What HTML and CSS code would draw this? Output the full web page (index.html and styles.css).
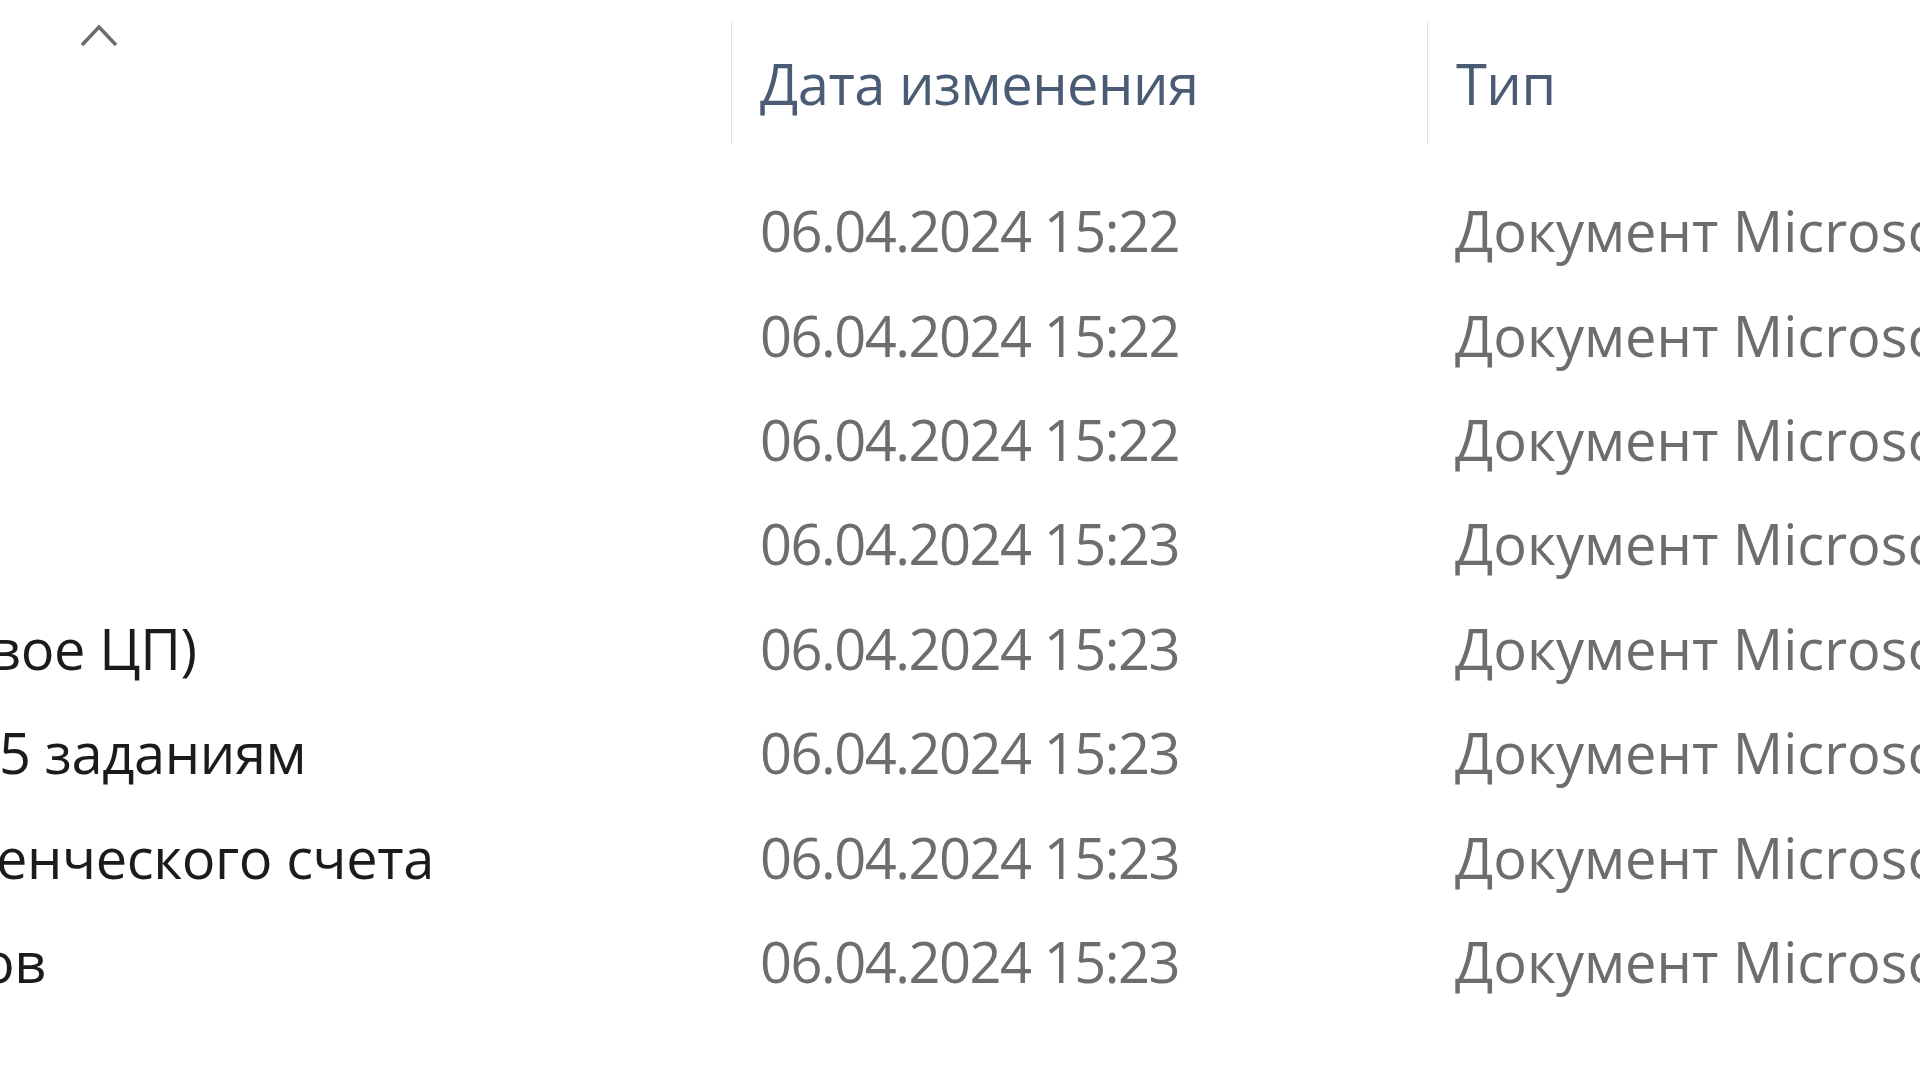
FILE: index.html
```html
<!DOCTYPE html>
<html lang="ru">
<head>
    <meta charset="UTF-8">
    <meta name="viewport" content="width=device-width, initial-scale=1.0">
    <title>Проводник</title>
    <link rel="stylesheet" href="styles.css">
</head>
<body>
    <div class="file-list">
        <div class="list-header">
            <div class="head-cell name-head">
                <svg class="sort-caret" width="40" height="28" viewBox="0 0 40 28">
                    <path d="M3 23 L20 5 L37 23" fill="none" stroke="#6c6c6c" stroke-width="3.5"/>
                </svg>
            </div>
            <div class="head-cell">Дата изменения</div>
            <div class="head-cell">Тип</div>
        </div>

        <div class="list-body">
            <div class="file-row">
                <div class="cell name"></div>
                <div class="cell date">06.04.2024 15:22</div>
                <div class="cell type">Документ Microsoft Word</div>
            </div>
            <div class="file-row">
                <div class="cell name"></div>
                <div class="cell date">06.04.2024 15:22</div>
                <div class="cell type">Документ Microsoft Word</div>
            </div>
            <div class="file-row">
                <div class="cell name"></div>
                <div class="cell date">06.04.2024 15:22</div>
                <div class="cell type">Документ Microsoft Word</div>
            </div>
            <div class="file-row">
                <div class="cell name"></div>
                <div class="cell date">06.04.2024 15:23</div>
                <div class="cell type">Документ Microsoft Word</div>
            </div>
            <div class="file-row">
                <div class="cell name cut-more">вое ЦП)</div>
                <div class="cell date">06.04.2024 15:23</div>
                <div class="cell type">Документ Microsoft Word</div>
            </div>
            <div class="file-row">
                <div class="cell name cut-less">5 заданиям</div>
                <div class="cell date">06.04.2024 15:23</div>
                <div class="cell type">Документ Microsoft Word</div>
            </div>
            <div class="file-row">
                <div class="cell name">енческого счета</div>
                <div class="cell date">06.04.2024 15:23</div>
                <div class="cell type">Документ Microsoft Word</div>
            </div>
            <div class="file-row">
                <div class="cell name cut-most">ов</div>
                <div class="cell date">06.04.2024 15:23</div>
                <div class="cell type">Документ Microsoft Word</div>
            </div>
        </div>
    </div>
</body>
</html>
```

FILE: styles.css
```css
html, body {
    margin: 0;
    padding: 0;
    background: #fff;
    overflow: hidden;
}
body {
    font-family: 'Open Sans', 'Noto Sans', sans-serif;
    font-size: 56px;
    width: 1920px;
    height: 1080px;
}
.file-list {
    width: 1920px;
    padding-top: 22px;
}
.list-header,
.file-row {
    display: grid;
    grid-template-columns: 731px 696px 1fr;
    white-space: nowrap;
}
.list-header {
    height: 122px;
    margin-bottom: 34px;
}
.head-cell {
    display: flex;
    align-items: center;
    padding-left: 28px;
    border-left: 1px solid #e3e3e3;
    color: #4a5c74;
    letter-spacing: -0.5px;
    overflow: hidden;
}
.name-head {
    border-left: none;
    align-items: flex-start;
    padding-left: 79px;
}
.sort-caret { display: block; }
.file-row {
    height: 104.4px;
    align-items: center;
}
.cell {
    overflow: hidden;
    padding-left: 28px;
    color: #6d6d6d;
}
.cell.name {
    padding-left: 0;
    text-indent: -4px;
    color: #1b1b1b;
    letter-spacing: -0.4px;
}
.cell.name.cut-less { text-indent: -1px; }
.cell.name.cut-more { text-indent: -11px; }
.cell.name.cut-most { text-indent: -19px; }
.cell.date {
    padding-left: 29px;
    letter-spacing: -1.5px;
}
.cell.type { padding-left: 28px; }
```
